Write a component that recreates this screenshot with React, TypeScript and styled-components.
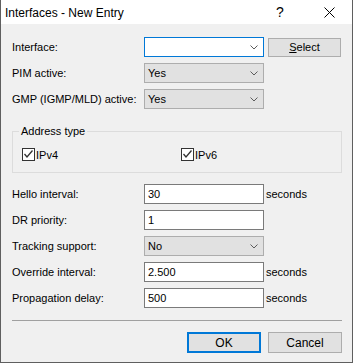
import styled, { createGlobalStyle } from "styled-components";

const GlobalStyle = createGlobalStyle`
  html, body {
    margin: 0;
    padding: 0;
    background: #f0f0f0;
  }
  * {
    box-sizing: border-box;
  }
`;

const Window = styled.div`
  width: 353px;
  height: 363px;
  display: flex;
  flex-direction: column;
  background: #f0f0f0;
  border: 1px solid #5f5f5f;
  border-top: none;
  font-family: "Liberation Sans", Arial, sans-serif;
  font-size: 11px;
  color: #000;
`;

const TitleBar = styled.div`
  height: 24px;
  display: flex;
  align-items: center;
  background: #fff;
  padding-left: 4px;
`;

const Title = styled.div`
  flex: 1;
  font-family: "Liberation Sans", Arial, sans-serif;
  font-size: 12px;
  padding-top: 1px;
`;

const HelpButton = styled.div`
  width: 46px;
  text-align: center;
  font-size: 14px;
  margin-right: 3px;
`;

const CloseButton = styled.div`
  width: 46px;
  display: flex;
  justify-content: center;
  align-items: center;
`;

const Body = styled.div`
  flex: 1;
  display: flex;
  flex-direction: column;
  padding: 13px 10px 0 11px;
`;

const Rows = styled.div`
  display: flex;
  flex-direction: column;
  gap: 6px;
`;

const Row = styled.div`
  display: grid;
  grid-template-columns: 132px 120px auto;
  align-items: center;
  height: 20px;
`;

const Label = styled.div`
  white-space: nowrap;
`;

const TextBox = styled.div<{ $focused?: boolean }>`
  height: 20px;
  background: #fff;
  border: 1px solid ${p => (p.$focused ? "#0078d7" : "#7a7a7a")};
  display: flex;
  align-items: center;
  padding-left: 3px;
  position: relative;
`;

const ComboBox = styled.div`
  height: 20px;
  background: #e1e1e1;
  border: 1px solid #adadad;
  display: flex;
  align-items: center;
  padding-left: 3px;
`;

const ComboText = styled.span`
  flex: 1;
`;

const Chevron = styled.svg`
  margin-right: 5px;
`;

const Unit = styled.div`
  padding-left: 2px;
`;

const SideButton = styled.div`
  margin-left: 4px;
  width: 73px;
  height: 19px;
  background: #e1e1e1;
  border: 1px solid #adadad;
  display: flex;
  align-items: center;
  justify-content: center;
  u {
    text-decoration: underline;
  }
`;

const GroupBox = styled.div`
  position: relative;
  margin-top: 22px;
  height: 42px;
  border: 1px solid #dcdcdc;
  display: grid;
  grid-template-columns: 159px auto;
  padding: 16px 0 0 9px;
`;

const Legend = styled.div`
  position: absolute;
  top: -7px;
  left: 6px;
  padding: 0 2px;
  background: #f0f0f0;
  line-height: 13px;
`;

const Check = styled.label`
  display: flex;
  align-items: center;
  gap: 1px;
  height: 13px;
`;

const CheckBox = styled.span`
  width: 13px;
  height: 13px;
  border: 1px solid #333;
  background: #fff;
  display: flex;
  align-items: center;
  justify-content: center;
`;

const LowerRows = styled(Rows)`
  margin-top: 11px;
`;

const Separator = styled.div`
  margin-top: 12px;
  height: 1px;
  background: #a0a0a0;
`;

const ButtonBar = styled.div`
  display: flex;
  justify-content: flex-end;
  gap: 7px;
  margin-top: 11px;
`;

const DialogButton = styled.div<{ $default?: boolean }>`
  width: 74px;
  height: 21px;
  background: #e1e1e1;
  border: ${p => (p.$default ? "2px solid #0078d7" : "1px solid #adadad")};
  display: flex;
  align-items: center;
  justify-content: center;
  font-size: 12px;
`;

function Combo({ value }: { value: string }) {
  return (
    <ComboBox>
      <ComboText>{value}</ComboText>
      <Chevron width="8" height="5" viewBox="0 0 8 5">
        <polyline points="0.5,0.5 4,4 7.5,0.5" fill="none" stroke="#5c5c5c" strokeWidth="1" />
      </Chevron>
    </ComboBox>
  );
}

function Checked({ label }: { label: string }) {
  return (
    <Check>
      <CheckBox>
        <svg width="11" height="11" viewBox="0 0 11 11">
          <polyline points="1.5,5 4,8 9.5,1.5" fill="none" stroke="#333" strokeWidth="1.3" />
        </svg>
      </CheckBox>
      {label}
    </Check>
  );
}

export default function App() {
  return (
    <>
      <GlobalStyle />
      <Window>
        <TitleBar>
          <Title>Interfaces - New Entry</Title>
          <HelpButton>?</HelpButton>
          <CloseButton>
            <svg width="11" height="11" viewBox="0 0 11 11">
              <path d="M0.5 0.5 L10.5 10.5 M10.5 0.5 L0.5 10.5" stroke="#000" strokeWidth="1" />
            </svg>
          </CloseButton>
        </TitleBar>
        <Body>
          <Rows>
            <Row>
              <Label>Interface:</Label>
              <TextBox $focused>
                <ComboText />
                <Chevron width="8" height="5" viewBox="0 0 8 5">
                  <polyline points="0.5,0.5 4,4 7.5,0.5" fill="none" stroke="#5c5c5c" strokeWidth="1" />
                </Chevron>
              </TextBox>
              <SideButton>
                <span>
                  <u>S</u>elect
                </span>
              </SideButton>
            </Row>
            <Row>
              <Label>PIM active:</Label>
              <Combo value="Yes" />
            </Row>
            <Row>
              <Label>GMP (IGMP/MLD) active:</Label>
              <Combo value="Yes" />
            </Row>
          </Rows>
          <GroupBox>
            <Legend>Address type</Legend>
            <Checked label="IPv4" />
            <Checked label="IPv6" />
          </GroupBox>
          <LowerRows>
            <Row>
              <Label>Hello interval:</Label>
              <TextBox>30</TextBox>
              <Unit>seconds</Unit>
            </Row>
            <Row>
              <Label>DR priority:</Label>
              <TextBox>1</TextBox>
            </Row>
            <Row>
              <Label>Tracking support:</Label>
              <Combo value="No" />
            </Row>
            <Row>
              <Label>Override interval:</Label>
              <TextBox>2.500</TextBox>
              <Unit>seconds</Unit>
            </Row>
            <Row>
              <Label>Propagation delay:</Label>
              <TextBox>500</TextBox>
              <Unit>seconds</Unit>
            </Row>
          </LowerRows>
          <Separator />
          <ButtonBar>
            <DialogButton $default>OK</DialogButton>
            <DialogButton>Cancel</DialogButton>
          </ButtonBar>
        </Body>
      </Window>
    </>
  );
}
